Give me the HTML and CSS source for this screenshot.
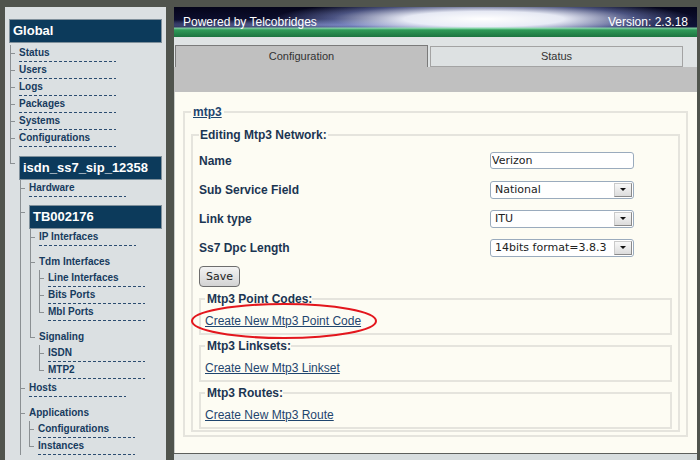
FILE: index.html
```html
<!DOCTYPE html>
<html>
<head>
  <meta charset="utf-8">
  <link rel="stylesheet" href="styles.css">
</head>
<body>
  <div class="page">
    <div class="sidebar">
      <div class="box">Global</div>
      <div class="tree top">
        <div class="node leaf"><span class="label">Status</span></div>
        <div class="node leaf"><span class="label">Users</span></div>
        <div class="node leaf"><span class="label">Logs</span></div>
        <div class="node leaf"><span class="label">Packages</span></div>
        <div class="node leaf"><span class="label">Systems</span></div>
        <div class="node leaf"><span class="label">Configurations</span></div>
        <div class="node branch">
          <div class="box">isdn_ss7_sip_12358</div>
          <div class="tree open">
            <div class="node leaf"><span class="label">Hardware</span></div>
            <div class="node branch">
              <div class="box">TB002176</div>
              <div class="tree">
                <div class="node leaf"><span class="label">IP Interfaces</span></div>
                <div class="node group">
                  <span class="label">Tdm Interfaces</span>
                  <div class="tree">
                    <div class="node leaf"><span class="label">Line Interfaces</span></div>
                    <div class="node leaf"><span class="label">Bits Ports</span></div>
                    <div class="node leaf"><span class="label">Mbl Ports</span></div>
                  </div>
                </div>
                <div class="node group">
                  <span class="label">Signaling</span>
                  <div class="tree">
                    <div class="node leaf"><span class="label">ISDN</span></div>
                    <div class="node leaf"><span class="label">MTP2</span></div>
                  </div>
                </div>
              </div>
            </div>
            <div class="node leaf after-branch"><span class="label">Hosts</span></div>
            <div class="node group">
              <span class="label">Applications</span>
              <div class="tree">
                <div class="node leaf"><span class="label">Configurations</span></div>
                <div class="node leaf"><span class="label">Instances</span></div>
              </div>
            </div>
          </div>
        </div>
      </div>
    </div>

    <div class="main">
      <div class="banner">
        <span>Powered by Telcobridges</span>
        <span>Version: 2.3.18</span>
      </div>
      <div class="tabs">
        <div class="tab active">Configuration</div>
        <div class="tab">Status</div>
      </div>
      <div class="band"></div>
      <div class="content">
        <fieldset class="outer">
          <legend><a href="#">mtp3</a></legend>
          <fieldset class="inner">
            <legend>Editing Mtp3 Network:</legend>
            <div class="form">
              <label>Name</label>
              <input class="input" type="text" value="Verizon">
              <label>Sub Service Field</label>
              <div class="select"><span>National</span><span class="arrow"></span></div>
              <label>Link type</label>
              <div class="select"><span>ITU</span><span class="arrow"></span></div>
              <label>Ss7 Dpc Length</label>
              <div class="select"><span>14bits format=3.8.3</span><span class="arrow"></span></div>
            </div>
            <button class="save">Save</button>
            <fieldset class="sub first">
              <legend>Mtp3 Point Codes:</legend>
              <a href="#">Create New Mtp3 Point Code</a>
            </fieldset>
            <fieldset class="sub">
              <legend>Mtp3 Linksets:</legend>
              <a href="#">Create New Mtp3 Linkset</a>
            </fieldset>
            <fieldset class="sub">
              <legend>Mtp3 Routes:</legend>
              <a href="#">Create New Mtp3 Route</a>
            </fieldset>
          </fieldset>
        </fieldset>
      </div>
      <div class="footer"></div>
    </div>
  </div>

  <svg class="callout" width="200" height="50" viewBox="0 0 200 50">
    <ellipse cx="96" cy="24" rx="92" ry="17" fill="none" stroke="#e3161d" stroke-width="2"/>
  </svg>
</body>
</html>
```

FILE: styles.css
```css
body {
  margin: 0;
  background-color: #50544d;
  font-family: "Liberation Sans", Arial, sans-serif;
}
.page {
  display: flex;
  gap: 8px;
  height: 460px;
  padding: 7px 3px 0 5px;
  box-sizing: border-box;
  overflow: hidden;
}

/* navigation tree */
.sidebar {
  width: 153px;
  flex: none;
  padding: 12px 4px 0;
  background-color: #dbe0e2;
  font-size: 10px;
  font-weight: bold;
  color: #173b5e;
}
.box {
  height: 24px;
  box-sizing: border-box;
  padding-left: 3px;
  border: 1px solid #7f909b;
  background-color: #0c3a5b;
  color: #fff;
  font-size: 13px;
  line-height: 22px;
}
.tree.top {
  margin-left: 1px;
  margin-top: 2px;
}
.branch > .tree {
  margin-left: 1px;
}
.node {
  padding-left: 9px;
  background-image: linear-gradient(#8b9093, #8b9093), linear-gradient(#8b9093, #8b9093);
  background-repeat: no-repeat;
  background-size: 1px 100%, 5px 1px;
  background-position: 0 0, 0 8px;
}
.node.group {
  padding-top: 8px;
  background-position: 0 0, 0 16px;
}
.node.branch {
  padding-top: 8px;
  background-position: 0 0, 0 15px;
}
.top > .node.branch {
  padding-top: 9px;
  background-position: 0 0, 0 16px;
}
.node.after-branch {
  padding-top: 1px;
  background-position: 0 0, 0 9px;
}
.tree > .node:last-child {
  background-size: 1px 9px, 5px 1px;
}
.tree > .group:last-child {
  background-size: 1px 17px, 5px 1px;
}
.tree > .branch:last-child {
  background-size: 1px 17px, 5px 1px;
}
.tree.open > .node:last-child {
  background-size: 1px 100%, 5px 1px;
}
.label {
  display: block;
  line-height: 16px;
  white-space: nowrap;
}
.leaf .label {
  width: 97px;
  padding-bottom: 1px;
  background: repeating-linear-gradient(to right, #2b4c70 0 3px, transparent 3px 5px) 0 100% / 97px 1px no-repeat;
}

/* main panel */
.main {
  width: 523px;
  flex: none;
  display: flex;
  flex-direction: column;
}
.banner {
  height: 30px;
  display: flex;
  justify-content: space-between;
  align-items: center;
  padding: 0 9px;
  color: #fff;
  font-size: 12px;
  background:
    linear-gradient(to bottom, transparent 0, transparent 20px, rgba(150, 235, 180, 0.85) 21px, #2f9a58 23px, #1c7440 30px),
    radial-gradient(ellipse 210px 20px at 310px 12px, #ffffff 0%, rgba(242, 245, 255, 0.95) 38%, rgba(140, 155, 220, 0.5) 72%, rgba(20, 20, 60, 0) 100%),
    radial-gradient(ellipse 320px 6px at 170px 18px, rgba(160, 175, 240, 0.6), rgba(20, 20, 60, 0)),
    linear-gradient(to bottom, #05051a, #0f1236 60%, #1a2046);
}
.tabs {
  display: flex;
  align-items: flex-start;
  gap: 2px;
  padding: 8px 0 0 1px;
  background-color: #dfe3e4;
}
.tab {
  width: 253px;
  height: 21px;
  margin-top: 1px;
  box-sizing: border-box;
  border: 1px solid #a3a3a3;
  background-color: #dde1e2;
  color: #333;
  font-size: 11px;
  line-height: 19px;
  text-align: center;
}
.tab.active {
  height: 22px;
  margin-top: 0;
  border-color: #7a7a7a;
  border-bottom: 0;
  background-color: #c0c0c0;
  line-height: 21px;
}
.band {
  height: 25px;
  background-color: #c0c0c0;
}
.content {
  flex: 1;
  padding: 13px 9px 0 8px;
  border-left: 1px solid #c9cdca;
  background-color: #fdfcf3;
  font-size: 12px;
  line-height: 14px;
}
.footer {
  height: 6px;
  border-top: 1px solid #5d605c;
  background-color: #d8dedf;
}

fieldset {
  margin: 0;
  min-width: 0;
  border: 2px solid #e5e4dd;
}
legend {
  font-size: 12px;
  font-weight: bold;
  line-height: 14px;
  color: #1b3552;
}
a {
  color: #1f456e;
}
.outer {
  padding: 9px 6px 3px;
}
.outer > legend {
  padding: 0 2px;
}
.inner {
  padding: 4px 6px 1px;
}
.inner > legend {
  padding: 0 1px;
}
.form {
  display: grid;
  grid-template-columns: 291px 144px;
  grid-auto-rows: 29px;
  align-items: center;
  font-weight: bold;
  color: #1b3552;
}
.input {
  width: 144px;
  height: 17px;
  box-sizing: border-box;
  margin: 0;
  padding: 0 0 0 1px;
  border: 1px solid #9aabbd;
  border-radius: 3px;
  background: #fff;
  color: #222;
  font: 11px "DejaVu Sans", sans-serif;
}
.select {
  height: 18px;
  box-sizing: border-box;
  display: flex;
  justify-content: space-between;
  align-items: center;
  padding: 0 1px 0 4px;
  border: 1px solid #9aabbd;
  border-radius: 3px;
  background: #fff;
  color: #222;
  font: 11px "DejaVu Sans", sans-serif;
}
.arrow {
  width: 18px;
  height: 14px;
  box-sizing: border-box;
  display: flex;
  justify-content: center;
  align-items: center;
  border: 1px solid #cacaca;
  border-right-color: #8a8a8a;
  border-bottom-color: #8a8a8a;
  background: linear-gradient(#f8f8f8, #dcdcdc);
}
.arrow::after {
  content: "";
  border-left: 3px solid transparent;
  border-right: 3px solid transparent;
  border-top: 3px solid #111;
}
.save {
  display: block;
  width: 41px;
  height: 21px;
  margin-top: 4px;
  padding: 0;
  border: 1px solid #6d6d6d;
  border-radius: 4px;
  background: linear-gradient(#f3f3f3, #d3d3d3);
  color: #222;
  font: 11px "DejaVu Sans", sans-serif;
}
.sub {
  margin-top: 4px;
  padding: 8px 4px 5px;
}
.sub.first {
  margin-top: 5px;
}
.sub > legend {
  padding: 0 0 0 2px;
}

.callout {
  position: absolute;
  left: 188px;
  top: 297px;
}
```
